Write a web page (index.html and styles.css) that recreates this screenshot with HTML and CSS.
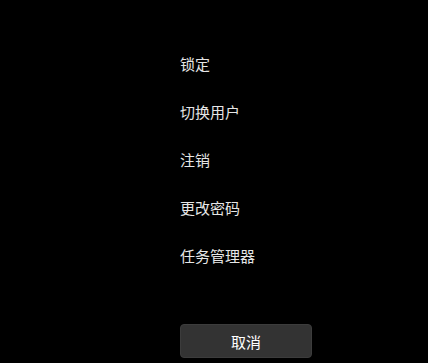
FILE: index.html
```html
<!DOCTYPE html>
<html lang="zh-CN">
<head>
    <meta charset="UTF-8">
    <meta name="viewport" content="width=device-width, initial-scale=1.0">
    <title>安全选项</title>
    <link rel="stylesheet" href="styles.css">
</head>
<body>
    <div class="screen">
        <ul class="options">
            <li class="option">锁定</li>
            <li class="option">切换用户</li>
            <li class="option">注销</li>
            <li class="option">更改密码</li>
            <li class="option">任务管理器</li>
        </ul>
        <button class="cancel">取消</button>
    </div>
</body>
</html>
```

FILE: styles.css
```css
html, body {
    margin: 0;
    background-color: #000;
}
body {
    font-family: "Noto Sans CJK SC", "Noto Sans", sans-serif;
    color: #e6e6e6;
}
.screen {
    width: 428px;
    height: 363px;
    padding-left: 180px;
    padding-top: 53px;
    box-sizing: border-box;
}
.options {
    list-style: none;
    margin: 0;
    padding: 0;
}
.option {
    font-size: 15px;
    height: 22px;
    line-height: 22px;
    margin-bottom: 26px;
    cursor: pointer;
}
.cancel {
    display: block;
    margin-top: 57px;
    width: 132px;
    height: 34px;
    background-color: #333;
    border: 1px solid #3c3c3c;
    border-radius: 4px;
    color: #fff;
    font-family: inherit;
    font-size: 15px;
    cursor: pointer;
}
```
